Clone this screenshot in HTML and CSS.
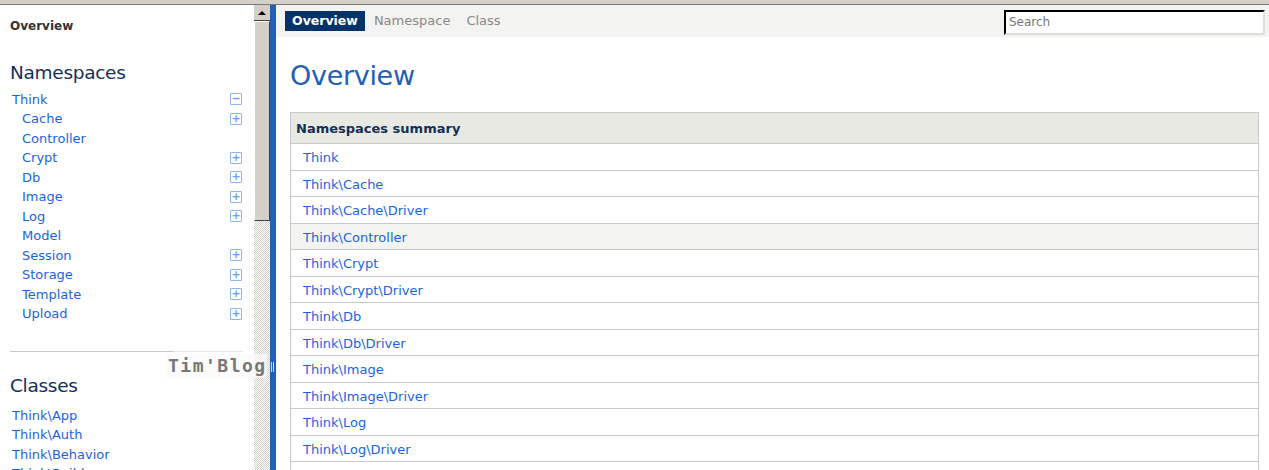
FILE: index.html
```html
<!DOCTYPE html>
<html lang="en">
<head>
    <meta charset="UTF-8">
    <title>Overview</title>
    <link rel="stylesheet" href="styles.css">
</head>
<body>
    <div class="frame-top"></div>
    <div class="layout">
        <div class="left">
            <div class="left-inner">
                <h3 class="left-overview">Overview</h3>

                <h3 class="left-title">Namespaces</h3>
                <ul class="tree">
                    <li><a href="#">Think</a><span class="toggle">&minus;</span></li>
                    <li class="sub"><a href="#">Cache</a><span class="toggle">+</span></li>
                    <li class="sub"><a href="#">Controller</a></li>
                    <li class="sub"><a href="#">Crypt</a><span class="toggle">+</span></li>
                    <li class="sub"><a href="#">Db</a><span class="toggle">+</span></li>
                    <li class="sub"><a href="#">Image</a><span class="toggle">+</span></li>
                    <li class="sub"><a href="#">Log</a><span class="toggle">+</span></li>
                    <li class="sub"><a href="#">Model</a></li>
                    <li class="sub"><a href="#">Session</a><span class="toggle">+</span></li>
                    <li class="sub"><a href="#">Storage</a><span class="toggle">+</span></li>
                    <li class="sub"><a href="#">Template</a><span class="toggle">+</span></li>
                    <li class="sub"><a href="#">Upload</a><span class="toggle">+</span></li>
                </ul>

                <hr class="left-sep">

                <h3 class="left-title classes">Classes</h3>
                <ul class="tree">
                    <li><a href="#">Think\App</a></li>
                    <li><a href="#">Think\Auth</a></li>
                    <li><a href="#">Think\Behavior</a></li>
                    <li><a href="#">Think\Build</a></li>
                </ul>
            </div>
            <div class="scrollbar">
                <div class="sb-btn"><span class="sb-arrow"></span></div>
                <div class="sb-thumb"></div>
                <div class="sb-track"></div>
            </div>
            <div class="watermark">Tim'Blog</div>
        </div>

        <div class="splitter"><span class="grip"></span></div>

        <div class="right">
            <div class="navbar">
                <ul class="nav">
                    <li class="active">Overview</li>
                    <li>Namespace</li>
                    <li>Class</li>
                </ul>
                <input class="search" type="text" placeholder="Search">
            </div>

            <div class="content">
                <h1>Overview</h1>
                <table class="summary">
                    <tr><th>Namespaces summary</th></tr>
                    <tr><td><a href="#">Think</a></td></tr>
                    <tr><td><a href="#">Think\Cache</a></td></tr>
                    <tr><td><a href="#">Think\Cache\Driver</a></td></tr>
                    <tr class="hover"><td><a href="#">Think\Controller</a></td></tr>
                    <tr><td><a href="#">Think\Crypt</a></td></tr>
                    <tr><td><a href="#">Think\Crypt\Driver</a></td></tr>
                    <tr><td><a href="#">Think\Db</a></td></tr>
                    <tr><td><a href="#">Think\Db\Driver</a></td></tr>
                    <tr><td><a href="#">Think\Image</a></td></tr>
                    <tr><td><a href="#">Think\Image\Driver</a></td></tr>
                    <tr><td><a href="#">Think\Log</a></td></tr>
                    <tr><td><a href="#">Think\Log\Driver</a></td></tr>
                    <tr><td><a href="#">Think\Model</a></td></tr>
                </table>
            </div>
        </div>
    </div>
</body>
</html>
```

FILE: styles.css
```css
html, body {
    margin: 0;
    height: 100%;
    overflow: hidden;
}
body {
    font-family: "DejaVu Sans", Verdana, sans-serif;
    font-size: 13px;
    background-color: #fff;
}
a {
    color: #1a63e0;
    text-decoration: none;
}
.frame-top {
    height: 4px;
    background-color: #d4d0c8;
    border-bottom: 1px solid #7a7a7a;
}
.layout {
    display: flex;
    height: calc(100% - 5px);
}

/* left panel */
.left {
    position: relative;
    display: flex;
    width: 270px;
    flex-shrink: 0;
}
.left-inner {
    flex: 1;
    padding: 0 10px;
    overflow: hidden;
}
.left-overview {
    margin: 13px 0 0;
    font-size: 12px;
    font-weight: bold;
    color: #333;
    line-height: 16px;
}
.left-title {
    margin: 27px 0 4.5px;
    font-size: 18.5px;
    font-weight: normal;
    color: #13305a;
    line-height: 24px;
    letter-spacing: -0.3px;
}
.left-title.classes {
    margin-top: 22px;
    margin-bottom: 8px;
}
.tree {
    list-style: none;
    margin: 0;
    padding: 0;
}
.tree li {
    display: flex;
    justify-content: space-between;
    align-items: center;
    height: 19.5px;
    padding-left: 2px;
    font-size: 13px;
}
.tree li.sub {
    padding-left: 12px;
}
.toggle {
    width: 10px;
    height: 10px;
    border: 1px solid #8cb4f0;
    border-radius: 1px;
    color: #6fa0ea;
    font-size: 11px;
    font-weight: bold;
    line-height: 9px;
    text-align: center;
    margin-right: 1px;
}
.left-sep {
    margin: 27px 0 0;
    border: none;
    height: 1px;
    background: linear-gradient(to right, #c8c8c8 70%, #e6e6e6 70%);
}

/* classic scrollbar */
.scrollbar {
    width: 16px;
    display: flex;
    flex-direction: column;
    border-left: 1px solid #fff;
}
.sb-btn {
    height: 15px;
    background-color: #d4d0c8;
    border-bottom: 1px solid #404040;
    display: flex;
    justify-content: center;
    align-items: center;
}
.sb-arrow {
    border-left: 4px solid transparent;
    border-right: 4px solid transparent;
    border-bottom: 4px solid #000;
}
.sb-thumb {
    height: 198px;
    background-color: #d4d0c8;
    border-top: 1px solid #fff;
    border-left: 1px solid #fff;
    border-right: 1px solid #404040;
    border-bottom: 1px solid #404040;
}
.sb-track {
    flex: 1;
    background-color: #f4f3ef;
    background-image: repeating-conic-gradient(#d4d0c8 0 25%, #fff 0 50%);
    background-size: 2px 2px;
}
.watermark {
    position: absolute;
    left: 166px;
    top: 349px;
    padding: 1px 0 1px 2px;
    background-color: rgba(250, 250, 250, 0.75);
    font-family: "DejaVu Sans Mono", monospace;
    font-size: 18px;
    font-weight: bold;
    line-height: 22px;
    color: #777;
    letter-spacing: 1.5px;
}

/* splitter */
.splitter {
    width: 6px;
    flex-shrink: 0;
    background-color: #215fb8;
    position: relative;
}
.grip {
    position: absolute;
    left: 1px;
    top: 357px;
    width: 1px;
    height: 10px;
    border-left: 1px solid #cfdcf3;
    border-right: 1px solid #cfdcf3;
}

/* right panel */
.right {
    flex: 1;
    min-width: 0;
}
.navbar {
    display: flex;
    justify-content: space-between;
    align-items: center;
    height: 32px;
    padding: 0 4px 0 9px;
    background-color: #f3f3f1;
}
.nav {
    display: flex;
    list-style: none;
    margin: 0;
    padding: 0;
    gap: 2px;
}
.nav li {
    padding: 3px 7px 3px 7px;
    color: #888;
    font-size: 13px;
    line-height: 14px;
}
.nav li.active {
    background-color: #053368;
    color: #fff;
    font-weight: bold;
    font-size: 12.5px;
}
.search {
    width: 251px;
    height: 19px;
    padding: 1px 3px;
    border: 2px inset #e0ded8;
    border-top-color: #404040;
    border-left-color: #404040;
    font-family: "DejaVu Sans", Verdana, sans-serif;
    font-size: 12px;
    margin-top: 2px;
}
.search::placeholder {
    color: #777;
}
.content {
    padding: 0 10px 0 14px;
}
.content h1 {
    margin: 21px 0 18px;
    font-size: 27px;
    font-weight: normal;
    color: #2060b8;
    line-height: 36px;
    letter-spacing: -0.3px;
}
.summary {
    width: 100%;
    border-collapse: collapse;
    border: 1px solid #c8c8c8;
}
.summary th {
    text-align: left;
    background-color: #e9e9e3;
    color: #13305a;
    font-size: 13px;
    padding: 0 5px;
    height: 30px;
    border-bottom: 1px solid #c8c8c8;
}
.summary td {
    height: 23.5px;
    padding: 2px 12px 0;
    border-bottom: 1px solid #c8c8c8;
    font-size: 13px;
}
.summary tr.hover td {
    background-color: #f3f3f1;
}
```
